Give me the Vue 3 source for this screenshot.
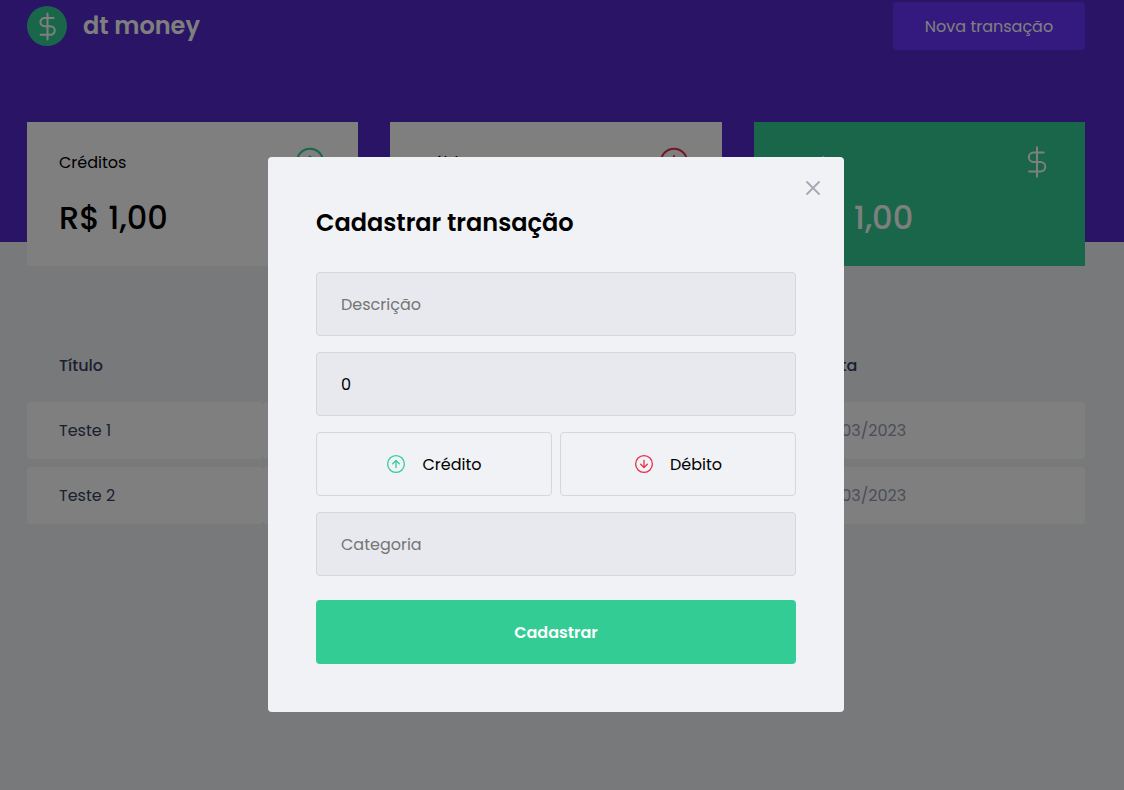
<script setup>
const cards = [
  { id: 'in', label: 'Créditos', value: 'R$ 1,00' },
  { id: 'out', label: 'Débitos', value: 'R$ 2,00' },
  { id: 'total', label: 'Total', value: '-R$ 1,00' },
]
const rows = [
  { title: 'Teste 1', value: 'R$ 1,00', category: 'Teste', date: '01/03/2023' },
  { title: 'Teste 2', value: '-R$ 2,00', category: 'Teste', date: '01/03/2023' },
]
</script>

<template>
  <div class="page">
    <header class="header">
      <div class="bar">
        <div class="logo">
          <svg width="40" height="40" viewBox="0 0 40 40" fill="none">
            <circle cx="20" cy="20" r="20" fill="#33cc95" />
            <path d="M20.5 7.6v25.8M26.6 12h-9.1a4.1 4.1 0 0 0 0 8.2h6a4.25 4.25 0 0 1 0 8.5H13.6" stroke="#fff" stroke-width="2" stroke-linecap="round" />
          </svg>
          <span class="brand">dt money</span>
        </div>
        <button class="new">Nova transação</button>
      </div>
    </header>

    <main class="content">
      <section class="summary">
        <article v-for="c in cards" :key="c.id" class="card" :class="c.id">
          <div class="card-top">
            <span class="card-label">{{ c.label }}</span>
            <svg width="32" height="32" viewBox="0 0 32 32" fill="none" stroke-width="2" stroke-linecap="round" stroke-linejoin="round">
              <g v-if="c.id === 'in'" stroke="#33cc95">
                <circle cx="16" cy="15.7" r="13" /><path d="M16 21.5v-11M10.7 15.8L16 10.5l5.3 5.3" />
              </g>
              <g v-else-if="c.id === 'out'" stroke="#e52e4d">
                <circle cx="16" cy="15.7" r="13" /><path d="M16 10v11.5M10.7 16.2l5.3 5.3l5.3-5.3" />
              </g>
              <path v-else stroke="#fff" d="M16 1.2v29.6M22.7 6.5H12.6a4.75 4.75 0 0 0 0 9.5h7a4.7 4.7 0 0 1 0 9.4H8" />
            </svg>
          </div>
          <strong class="amount">{{ c.value }}</strong>
        </article>
      </section>

      <section class="table">
        <div class="row head">
          <span>Título</span><span>Valor</span><span>Categoria</span><span>Data</span>
        </div>
        <div v-for="r in rows" :key="r.title" class="row">
          <span class="name">{{ r.title }}</span><span>{{ r.value }}</span><span>{{ r.category }}</span><span class="date">{{ r.date }}</span>
        </div>
      </section>
    </main>

    <div class="overlay">
      <form class="modal" @submit.prevent>
        <button type="button" class="close" aria-label="Fechar">
          <svg width="14" height="14" viewBox="0 0 14 14" stroke="#a6a8b3" stroke-width="1.8" stroke-linecap="round"><path d="M1 1l12 12M13 1L1 13" /></svg>
        </button>
        <h2>Cadastrar transação</h2>
        <input class="field" placeholder="Descrição" />
        <input class="field" value="0" />
        <div class="types">
          <button type="button" class="type credit">
            <svg width="20" height="20" viewBox="0 0 20 20" fill="none" stroke="#33cc95" stroke-width="1.3" stroke-linecap="round" stroke-linejoin="round"><circle cx="10" cy="10" r="8.4" /><path d="M10 13.6V6.5M6.7 9.7L10 6.4l3.3 3.3" /></svg>
            <span>Crédito</span>
          </button>
          <button type="button" class="type debit">
            <svg width="20" height="20" viewBox="0 0 20 20" fill="none" stroke="#e52e4d" stroke-width="1.3" stroke-linecap="round" stroke-linejoin="round"><circle cx="10" cy="10" r="8.4" /><path d="M10 6.4v7.1M6.7 10.3l3.3 3.3l3.3-3.3" /></svg>
            <span>Débito</span>
          </button>
        </div>
        <input class="field category" placeholder="Categoria" />
        <button class="submit">Cadastrar</button>
      </form>
    </div>
  </div>
</template>

<style>
body { margin: 0; overflow: hidden; background: #f0f2f5; }
</style>

<style scoped>
* { box-sizing: border-box; }
.page { position: relative; width: 1124px; height: 790px; overflow: hidden; background: #f0f2f5; font: 400 16px/24px Poppins, Inter, "Open Sans", sans-serif; color: #000; }
button, input { font: inherit; margin: 0; }
svg { display: block; flex: none; }
.header { height: 242px; padding: 2px 39px 0 27px; background: #5429cc; }
.bar { display: flex; justify-content: space-between; height: 48px; }
.logo { display: flex; align-items: center; gap: 16px; color: #fff; }
.brand { font-size: 24px; font-weight: 600; }
.new { width: 192px; height: 48px; padding: 2px 0 0; border: 0; border-radius: 4px; background: #6933ff; color: #fff; }
.content { width: 1058px; margin: -120px 0 0 27px; }
.summary { display: grid; grid-template-columns: repeat(3, 1fr); gap: 32px; }
.card { height: 144px; padding: 24px 32px; background: #fff; }
.card.total { background: #33cc95; color: #fff; }
.card-top { display: flex; justify-content: space-between; align-items: center; height: 32px; }
.card-label { padding-top: 2px; }
.amount { display: block; margin-top: 16px; font-size: 32px; line-height: 48px; font-weight: 500; }
.table { display: flex; flex-direction: column; gap: 8px; margin-top: 64px; }
.row { display: grid; grid-template-columns: 236px 262px 261.4px 298.6px; height: 57px; color: #969cb3; }
.row span { display: flex; align-items: center; padding: 0 32px; border-radius: 4px; background: #fff; }
.row.head { height: 64px; color: #363f5f; font-weight: 500; }
.row.head span { background: none; padding-top: 8px; }
.row .name { color: #363f5f; }
.overlay { position: absolute; inset: 0; background: rgba(0, 0, 0, 0.5); display: flex; justify-content: center; align-items: flex-start; padding: 157px 12px 0 0; }
.modal { position: relative; width: 576px; height: 555px; padding: 48px; border-radius: 4px; background: #f0f2f5; display: flex; flex-direction: column; }
.close { position: absolute; top: 24px; right: 24px; padding: 0; border: 0; background: none; }
h2 { height: 35px; margin: 0 0 32px; font-size: 24px; line-height: 36px; font-weight: 600; white-space: nowrap; }
.field { height: 64px; flex: none; padding: 0 24px; margin-bottom: 16px; border: 1px solid #d7d7d7; border-radius: 4px; background: #e7e9ee; outline: 0; color: #000; }
.field::placeholder { color: #757575; opacity: 1; font-weight: 400; }
.types { display: grid; grid-template-columns: 1fr 1fr; gap: 8px; margin-bottom: 16px; }
.type { display: flex; align-items: center; justify-content: center; gap: 16px; height: 64px; padding: 0; border: 1px solid #d7d7d7; border-radius: 4px; background: none; color: #000; }
.type span { padding-top: 2px; }
.category { margin-bottom: 24px; }
.submit { height: 64px; padding: 2px 0 0; border: 0; border-radius: 4px; background: #33cc95; color: #fff; font-weight: 600; }
</style>
